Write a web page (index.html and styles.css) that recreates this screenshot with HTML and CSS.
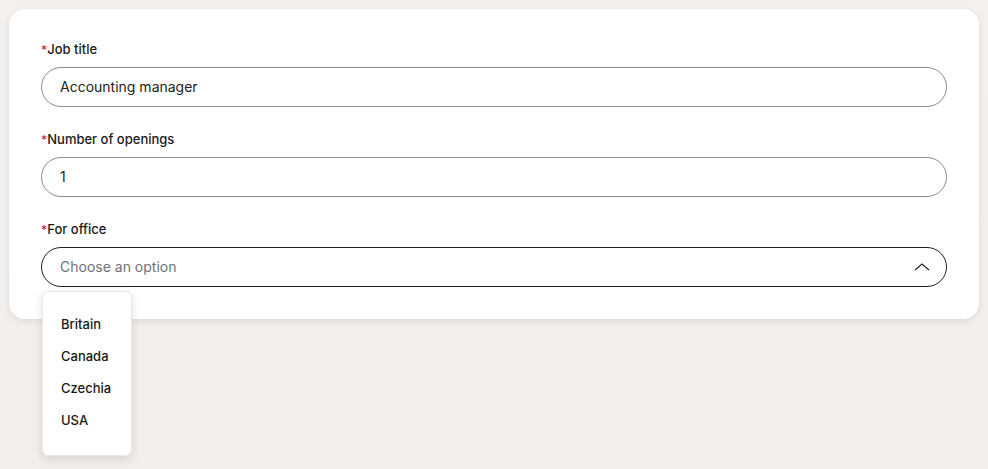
FILE: index.html
```html
<!DOCTYPE html>
<html lang="en">
<head>
<meta charset="utf-8">
<title>Job form</title>
<link rel="stylesheet" href="styles.css">
</head>
<body>
<div class="card">
  <div class="field">
    <label class="label"><span class="req">*</span>Job title</label>
    <div class="input">Accounting manager</div>
  </div>
  <div class="field">
    <label class="label"><span class="req">*</span>Number of openings</label>
    <div class="input">1</div>
  </div>
  <div class="field select-field">
    <label class="label"><span class="req">*</span>For office</label>
    <div class="input open">
      <span class="placeholder">Choose an option</span>
      <svg class="chev" width="16" height="10" viewBox="0 0 16 10"><path d="M1 8 L8 2 L15 8" fill="none" stroke="#222" stroke-width="1.2"/></svg>
    </div>
    <ul class="menu">
      <li>Britain</li>
      <li>Canada</li>
      <li>Czechia</li>
      <li>USA</li>
    </ul>
  </div>
</div>
</body>
</html>
```
FILE: styles.css
```css
* { box-sizing: border-box; }
html, body { margin: 0; height: 100%; }
body {
  padding: 9px;
  background: linear-gradient(180deg, #f3f0ed 0%, #f2eeeb 100%);
  font-family: Inter, "Noto Sans", sans-serif;
  color: #1b1b1b;
}
.card {
  width: 970px;
  background: #fff;
  border-radius: 16px;
  padding: 32px;
  display: flex;
  flex-direction: column;
  gap: 24px;
  box-shadow: 0 2px 6px rgba(60, 40, 30, 0.10);
}
.field {
  display: flex;
  flex-direction: column;
  gap: 10px;
  position: relative;
}
.label {
  display: block;
  height: 16px;
  font-size: 13px;
  line-height: 16px;
  font-weight: 500;
  color: #1a1a1a;
}
.req {
  color: #d42a2a;
  font-size: 12px;
  line-height: 1;
}
.input {
  height: 40px;
  border: 1px solid #8c8c8c;
  border-radius: 20px;
  padding: 0 16px 1px 18px;
  display: flex;
  align-items: center;
  justify-content: space-between;
  font-size: 14px;
  color: #222;
}
.input.open { border-color: #1f1f1f; }
.placeholder { color: #6f7275; }
.menu {
  position: absolute;
  left: 1px;
  top: 70px;
  width: 90px;
  margin: 0;
  padding: 16px 0 19px;
  list-style: none;
  background: #fff;
  border: 1px solid #ebe8e6;
  border-radius: 6px;
  box-shadow: 0 3px 10px rgba(60, 40, 30, 0.14);
  z-index: 2;
}
.menu li {
  height: 32px;
  line-height: 32px;
  padding-left: 18px;
  font-size: 13px;
  font-weight: 450;
  color: #1a1a1a;
}
```
